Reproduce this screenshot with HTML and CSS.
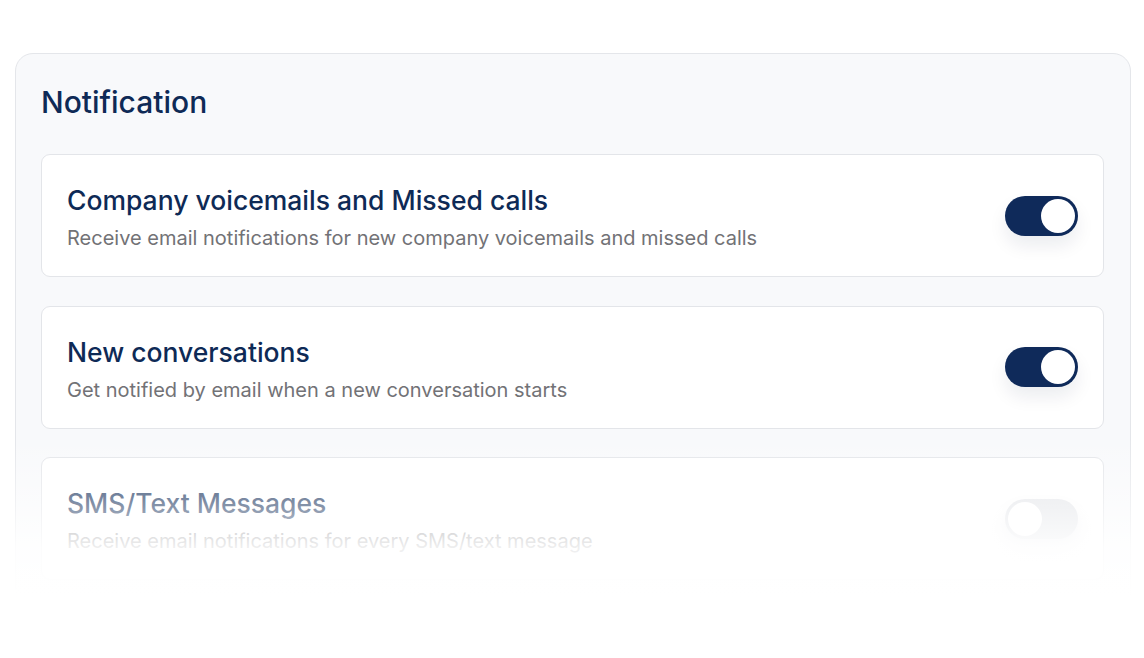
FILE: index.html
```html
<!DOCTYPE html>
<html lang="en">
<head>
<meta charset="utf-8">
<title>Notification</title>
<link rel="stylesheet" href="styles.css">
</head>
<body>
<div class="stage">
  <section class="panel">
    <h1 class="panel-title">Notification</h1>
    <div class="cards">
      <div class="card">
        <div class="card-text">
          <h2 class="card-title">Company voicemails and Missed calls</h2>
          <p class="card-desc">Receive email notifications for new company voicemails and missed calls</p>
        </div>
        <span class="toggle on"><span class="knob"></span></span>
      </div>
      <div class="card">
        <div class="card-text">
          <h2 class="card-title">New conversations</h2>
          <p class="card-desc">Get notified by email when a new conversation starts</p>
        </div>
        <span class="toggle on"><span class="knob"></span></span>
      </div>
      <div class="card">
        <div class="card-text">
          <h2 class="card-title">SMS/Text Messages</h2>
          <p class="card-desc">Receive email notifications for every SMS/text message</p>
        </div>
        <span class="toggle off"><span class="knob"></span></span>
      </div>
    </div>
  </section>
  <div class="fade"></div>
</div>
</body>
</html>
```

FILE: styles.css
```css
html, body {
  margin: 0;
  padding: 0;
  background: #ffffff;
}
body {
  font-family: "Inter", "Noto Sans", sans-serif;
  width: 1144px;
  height: 658px;
  overflow: hidden;
}
.stage {
  position: relative;
  padding: 53px 13px 0 15px;
  height: 605px;
  overflow: hidden;
}
.panel {
  background: #f8f9fb;
  border: 1px solid #e4e6ea;
  border-radius: 18px;
  padding: 30px 26px 40px 25px;
}
.panel-title {
  margin: 0;
  font-size: 30px;
  line-height: 36px;
  font-weight: 500;
  color: #0e2a56;
}
.cards {
  margin-top: 34px;
  display: flex;
  flex-direction: column;
  gap: 28.5px;
}
.card {
  height: 121px;
  background: #ffffff;
  border: 1px solid #e3e5e9;
  border-radius: 9px;
  display: flex;
  align-items: center;
  justify-content: space-between;
  padding: 0 25px 0 25px;
}
.card-text {
  display: flex;
  flex-direction: column;
  gap: 8px;
  margin-top: 5px;
}
.card-title {
  margin: 0;
  font-size: 26.5px;
  line-height: 32px;
  font-weight: 500;
  color: #0e2a56;
}
.card-desc {
  margin: 0;
  font-size: 20px;
  line-height: 28px;
  font-weight: 400;
  color: #727276;
}
.toggle {
  width: 73px;
  height: 40px;
  border-radius: 20px;
  box-sizing: border-box;
  padding: 3px;
  display: flex;
  box-shadow: 0 10px 18px rgba(15, 30, 60, 0.08);
}
.toggle.on {
  background: #0f2a5a;
  justify-content: flex-end;
}
.toggle.off {
  background: #e3e5e9;
  justify-content: flex-start;
}
.knob {
  width: 34px;
  height: 34px;
  border-radius: 50%;
  background: #ffffff;
}
.fade {
  position: absolute;
  left: 0;
  right: 0;
  top: 437px;
  bottom: 0;
  background: linear-gradient(to bottom,
    rgba(255,255,255,0) 0px,
    rgba(255,255,255,0.5) 70px,
    rgba(255,255,255,0.88) 110px,
    rgba(255,255,255,1) 160px);
}
```
